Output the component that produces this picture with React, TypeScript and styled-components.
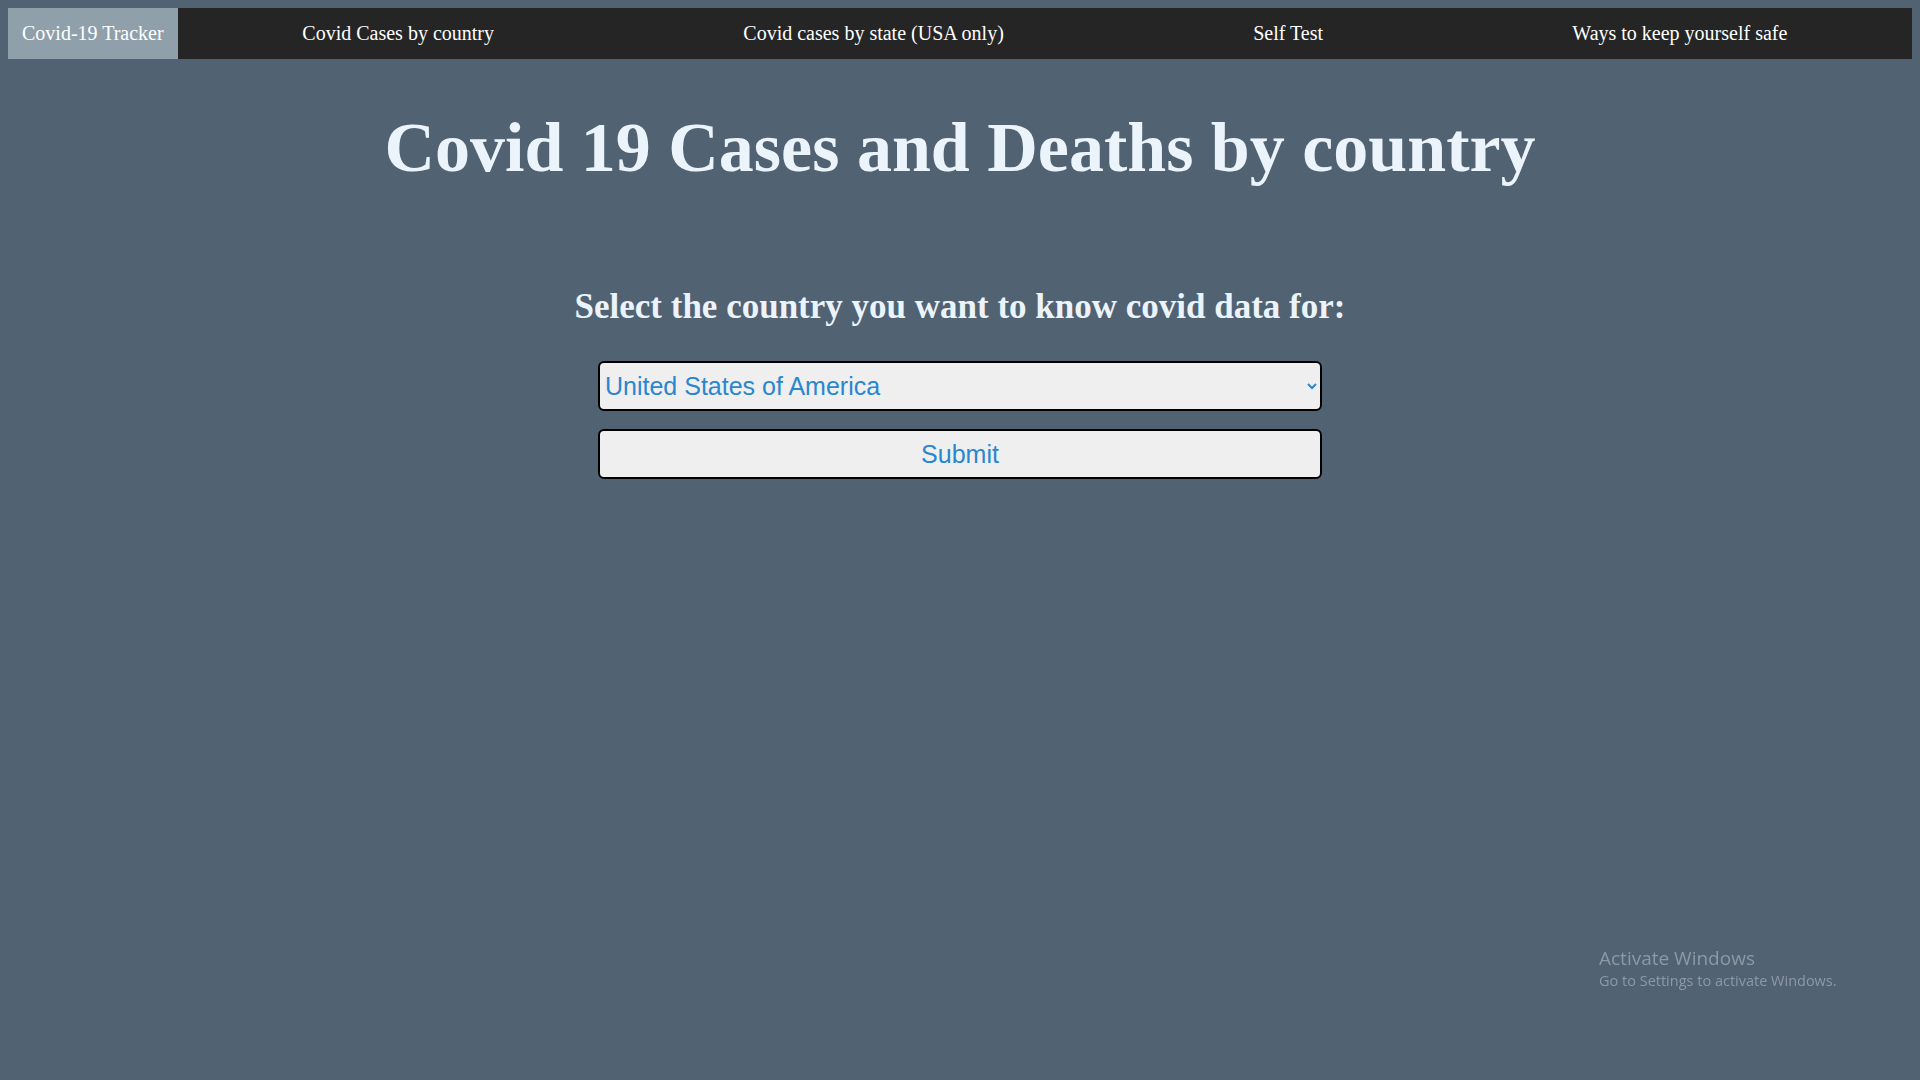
import styled, { createGlobalStyle } from "styled-components";

const GlobalStyle = createGlobalStyle`
  html, body {
    background: #516273;
  }

  body {
    margin: 8px;
    font-family: "Liberation Serif", "Times New Roman", serif;
  }
`;

const Nav = styled.nav`
  display: flex;
  align-items: stretch;
  height: 51px;
  background: #252525;
`;

const Brand = styled.a`
  display: flex;
  align-items: center;
  padding: 0 14px;
  background: #8fa0ab;
  color: #ffffff;
  font-size: 20px;
  text-decoration: none;
`;

const Links = styled.ul`
  flex: 1;
  display: flex;
  align-items: center;
  justify-content: space-around;
  margin: 0;
  padding: 0;
  list-style-type: none;
`;

const Link = styled.a`
  color: #ffffff;
  font-size: 20px;
  text-decoration: none;
`;

const Main = styled.main`
  display: flex;
  flex-direction: column;
  align-items: center;
  text-align: center;
`;

const Title = styled.h1`
  margin: 49px 0 0;
  font-size: 70px;
  font-weight: 700;
  color: #ebf3fb;
`;

const Subtitle = styled.h2`
  margin: 99px 0 0;
  font-size: 35px;
  font-weight: 700;
  color: #ebf3fb;
`;

const Form = styled.form`
  display: flex;
  flex-direction: column;
  gap: 18px;
  width: 724px;
  margin-top: 34px;
`;

const Select = styled.select`
  box-sizing: border-box;
  width: 100%;
  height: 50px;
  padding: 0 1px;
  border: 2px solid #000000;
  border-radius: 6px;
  background: #efefef;
  color: #2a86cf;
  font-family: "Liberation Sans", Arial, sans-serif;
  font-size: 25px;
`;

const Button = styled.button`
  box-sizing: border-box;
  width: 100%;
  height: 50px;
  border: 2px solid #000000;
  border-radius: 6px;
  background: #efefef;
  color: #2a86cf;
  font-family: "Liberation Sans", Arial, sans-serif;
  font-size: 25px;
`;

const Watermark = styled.div`
  position: fixed;
  left: 1599px;
  top: 945px;
  color: #8d99a5;
  font-family: "Open Sans", "Noto Sans", sans-serif;
  pointer-events: none;
`;

const WatermarkTitle = styled.div`
  font-size: 19px;
  line-height: 26px;
`;

const WatermarkText = styled.div`
  font-size: 14.5px;
  line-height: 20px;
`;

const links = [
  "Covid Cases by country",
  "Covid cases by state (USA only)",
  "Self Test",
  "Ways to keep yourself safe",
];

const countries = [
  "United States of America",
  "India",
  "Brazil",
  "France",
  "Germany",
  "United Kingdom",
];

export default function App() {
  return (
    <>
      <GlobalStyle />
      <Nav>
        <Brand href="#">Covid-19 Tracker</Brand>
        <Links>
          {links.map((label) => (
            <li key={label}>
              <Link href="#">{label}</Link>
            </li>
          ))}
        </Links>
      </Nav>

      <Main>
        <Title>Covid 19 Cases and Deaths by country</Title>
        <Subtitle>Select the country you want to know covid data for:</Subtitle>
        <Form onSubmit={(e) => e.preventDefault()}>
          <Select defaultValue="United States of America">
            {countries.map((c) => (
              <option key={c}>{c}</option>
            ))}
          </Select>
          <Button type="submit">Submit</Button>
        </Form>
      </Main>

      <Watermark>
        <WatermarkTitle>Activate Windows</WatermarkTitle>
        <WatermarkText>Go to Settings to activate Windows.</WatermarkText>
      </Watermark>
    </>
  );
}
